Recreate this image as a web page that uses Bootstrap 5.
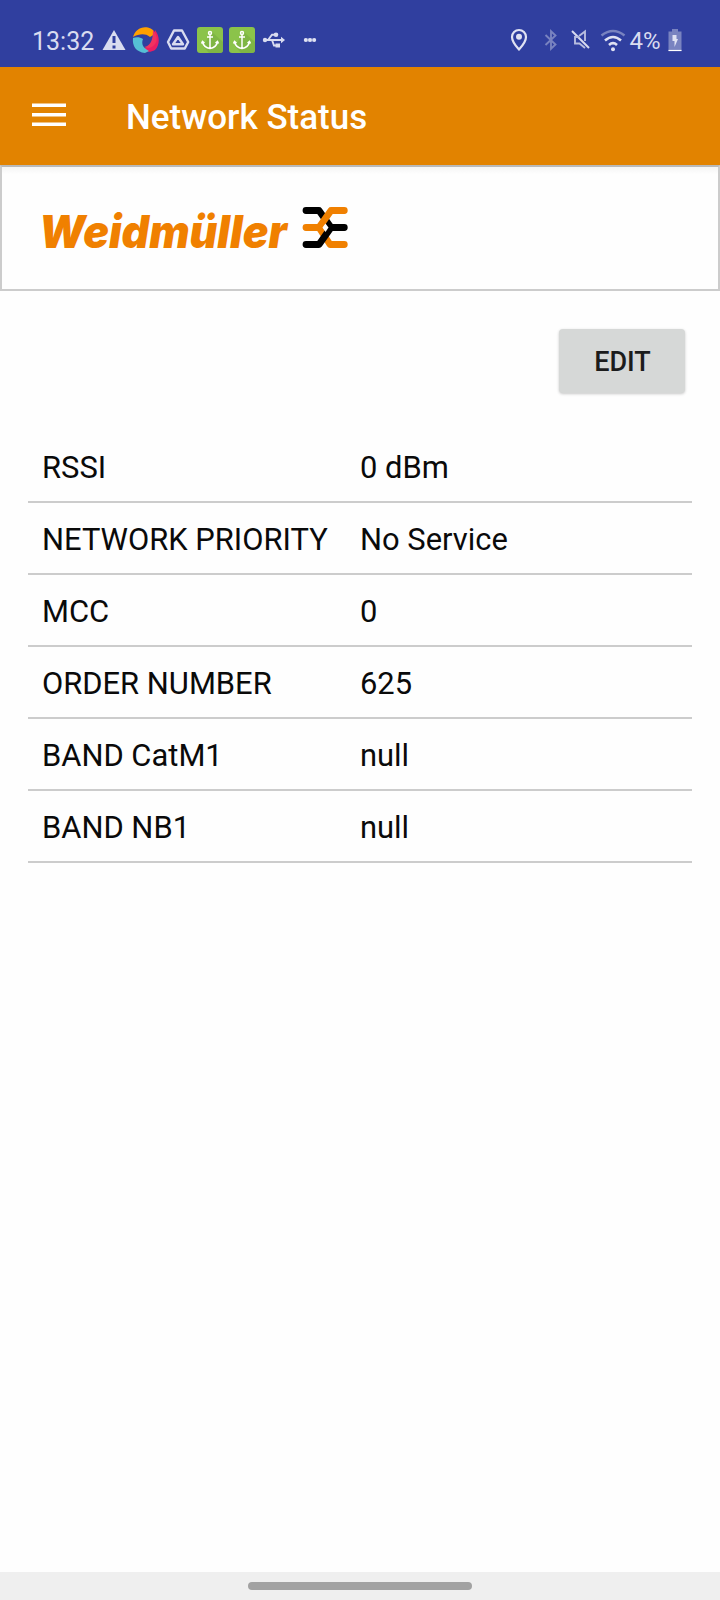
<!DOCTYPE html>
<html lang="en">
<head>
<meta charset="utf-8">
<meta name="viewport" content="width=device-width, initial-scale=1">
<title>Network Status</title>
<link href="https://cdn.jsdelivr.net/npm/bootstrap@5.3.0/dist/css/bootstrap.min.css" rel="stylesheet">
<style>
body{font-family:Roboto,"Noto Sans",sans-serif;color:#0a0a0a;background:#fefefe;height:1600px;overflow:hidden}
svg{display:block;flex:none}
.status-bar{height:67px;background:#303f9f;color:#d9dcf0}
.status-time,.status-pct{height:67px;line-height:52px;padding-top:15px;white-space:nowrap}
.status-time{width:70px;margin-left:32px;font-size:25px;padding-top:16px}
.status-pct{width:33px;font-size:24px;padding-left:1.5px}
.app-bar{height:98px;background:#e28300;color:#fff}
.app-title{font-size:35px;font-weight:500;line-height:48px;margin:3px 0 0 60px}
.menu-btn{margin-left:32px;margin-top:-2px}
.brand-box{height:126px;border:2px solid #ccc;border-top-color:#b9b9b9;background:linear-gradient(#f4f4f4,#fefefe 7px)}
.brand-box svg{margin-left:38px}
.edit-btn{width:126px;height:64px;margin:38px 35px 0 0;background:#d6d8d7;border:0;border-radius:4px;font-size:27px;font-weight:500;color:#1c1c1c;box-shadow:0 1px 3px rgba(0,0,0,.22);padding:3px 0 0 1px}
.info-list{margin:38px 28px 0}
.info-row{height:72px;border-bottom:2px solid #ccc;font-size:30.9px;line-height:36px;padding:19px 0 0 14px}
.info-key{width:318px;white-space:nowrap}
.nav-bar{height:28px;background:#efefef}
.nav-pill{width:224px;height:8px;border-radius:4px;background:#a2a2a2}
</style>
</head>
<body class="d-flex flex-column">
<header>
<div class="status-bar d-flex">
  <div class="status-time">13:32</div>
  <svg width="29" height="67" viewBox="102 0 29 67"><path d="M114 30 125.500 50H102.500Z" fill="#d9dcf0"/><path d="M114 36v7M114 45.500v3" stroke="#303f9f" stroke-width="3"/></svg>
  <svg width="32" height="67" viewBox="131 0 32 67"><path d="M133 37C135 30 141 26 148 27.500c4 1 6 3 7 6.500l-5 3c-5-4-11-3-17 0Z" fill="#ffa000"/><path d="M155 30c5 6 5 15 0 20-5 3-10 2-13-1l3-1c6-1 9-6 10-18Z" fill="#e91e63"/><path d="M153 30c4 4 5 10 2 14-3 4-7 5-11 3 6-1 9-6 9-17Z" fill="#f0325f"/><path d="M133 38c-1 8 3 14 12 15l4-2c-6-3-8-7-6-12-3-2-7-2-10-1Z" fill="#55bfd5"/></svg>
  <svg width="34" height="67" viewBox="163 0 34 67"><g fill="none" stroke="#d9dcf0" stroke-width="2.400" stroke-linejoin="round"><path d="M174 30.500h8l6.200 11.500-3.400 6.500h-13.600L168 42Z"/><path d="m178 37 5 7.300h-10Z"/></g></svg>
  <svg width="32" height="67" viewBox="197 0 32 67"><rect x="197" y="27" width="26" height="26" rx="3" fill="#8bc34a"/><path d="m212 32 11 10v8q0 3-3 3h-11l-6-7Z" fill="#7bb043" opacity=".7"/><g fill="none" stroke="#fff" stroke-width="1.500"><circle cx="210" cy="33" r="1.500"/><path d="M210 35v13M207 37h6M202.500 42c1 4 3.500 6 7.500 6.500 4-.5 6.500-2.500 7.500-6.500M201.500 43.500l1-2 2 1.500M218.500 43.500l-1-2-2 1.500"/></g></svg>
  <svg width="32" height="67" viewBox="197 0 32 67"><rect x="197" y="27" width="26" height="26" rx="3" fill="#8bc34a"/><path d="m212 32 11 10v8q0 3-3 3h-11l-6-7Z" fill="#7bb043" opacity=".7"/><g fill="none" stroke="#fff" stroke-width="1.500"><circle cx="210" cy="33" r="1.500"/><path d="M210 35v13M207 37h6M202.500 42c1 4 3.500 6 7.500 6.500 4-.5 6.500-2.500 7.500-6.500M201.500 43.500l1-2 2 1.500M218.500 43.500l-1-2-2 1.500"/></g></svg>
  <svg width="38" height="67" viewBox="261 0 38 67"><g fill="#d9dcf0"><circle cx="265" cy="40" r="2.200"/><path d="m281 36.800 4 3.200-4 3.200Z"/><circle cx="276" cy="34.700" r="2.300"/><rect x="275.500" y="43.500" width="4.500" height="4"/></g><path d="M265 40h17M268 40l4-5.300h4M272 40l2 5.500h3" fill="none" stroke="#d9dcf0" stroke-width="1.900"/></svg>
  <svg width="20" height="67" viewBox="299 0 20 67"><path d="M306 40h8" stroke="#8c95ca" stroke-width="3"/><g fill="#e0e2f3"><circle cx="305.700" cy="40" r="1.900"/><circle cx="310" cy="40" r="1.900"/><circle cx="314.300" cy="40" r="1.900"/></g></svg>
  <svg class="ms-auto" width="32" height="67" viewBox="508 0 32 67"><path d="M519 30a7 7 0 0 0-7 7c0 5 7 12.500 7 12.500s7-7.500 7-12.500a7 7 0 0 0-7-7Z" fill="none" stroke="#e0e2f3" stroke-width="2.200"/><circle cx="519" cy="36.700" r="3" fill="#e0e2f3"/></svg>
  <svg width="28" height="67" viewBox="540 0 28 67"><path d="m545.500 35 10 9.500-4.500 4.300V31.200l4.500 4.300-10 9.500" fill="none" stroke="#7983c0" stroke-width="1.900"/></svg>
  <svg width="32" height="67" viewBox="568 0 32 67"><path d="m572 31 17 17" stroke="#d9dcf0" stroke-width="2"/><path d="M579 36l6-4.500V41M579 37h-4v6.500h4.500l5.500 4.500" fill="none" stroke="#b7bddf" stroke-width="1.900"/></svg>
  <svg width="28" height="67" viewBox="600 0 28 67"><g fill="none" stroke-width="2.600"><path d="M601.500 35.500Q613 26.500 624.500 35.500" stroke="#7983c0"/><path d="M605 40.500q8-7 16 0M609 45q4-3.600 8 0" stroke="#e0e2f3"/></g><circle cx="613" cy="49.300" r="2" fill="#e0e2f3"/></svg>
  <div class="status-pct">4%</div>
  <svg width="59" height="67" viewBox="661 0 59 67"><path d="M668.500 31.500h3.500V29h6v2.500h3.500V51h-13Z" fill="#7983c0"/><path d="M668.500 50.500h13" stroke="#fff" stroke-width="1.200"/><path d="M672.500 35h4v4h1.500l-3.500 8v-6h-2Z" fill="#e0e2f3"/></svg>
</div>
<nav class="app-bar d-flex align-items-center" aria-label="Main">
  <svg class="menu-btn" width="34" height="24" viewBox="0 0 34 24" role="img" aria-label="Menu"><path d="M0 2.200h34M0 11.700h34M0 21.200h34" stroke="#fff" stroke-width="3.400"/></svg>
  <h1 class="app-title">Network Status</h1>
</nav>
</header>
<section class="brand-box">
  <svg width="320" height="122" viewBox="40 167 320 122" role="img" aria-label="Weidmüller">
    <text x="39" y="248" textLength="248" lengthAdjust="spacingAndGlyphs" font-family="Inter,Roboto,sans-serif" font-size="45" font-weight="900" font-style="italic" fill="#f08000">Weidmüller</text>
    <g fill="none" stroke-width="6.800" stroke-linecap="round" stroke-linejoin="round">
      <path d="M306 210.500h13l12 17" stroke="#000"/>
      <path d="M306 227.500h13l11 17h14.300" stroke="#f08000"/>
      <path d="M319 227.500l12-17h13.300" stroke="#f08000"/>
      <path d="M306 244.500h13l12-17h13.300" stroke="#000"/>
    </g>
    <path d="m325.500 223.500 3 4-3 4.500-3-4.500Z" fill="#fefefe"/>
  </svg>
</section>
<main class="flex-grow-1">
  <div class="d-flex justify-content-end"><button class="btn edit-btn" type="button">EDIT</button></div>
  <div class="info-list">
    <div class="info-row d-flex"><div class="info-key">RSSI</div><div>0 dBm</div></div>
    <div class="info-row d-flex"><div class="info-key">NETWORK PRIORITY</div><div>No Service</div></div>
    <div class="info-row d-flex"><div class="info-key">MCC</div><div>0</div></div>
    <div class="info-row d-flex"><div class="info-key">ORDER NUMBER</div><div>625</div></div>
    <div class="info-row d-flex"><div class="info-key">BAND CatM1</div><div>null</div></div>
    <div class="info-row d-flex"><div class="info-key">BAND NB1</div><div>null</div></div>
  </div>
</main>
<footer class="nav-bar d-flex align-items-center justify-content-center"><div class="nav-pill"></div></footer>
<script src="https://cdn.jsdelivr.net/npm/bootstrap@5.3.0/dist/js/bootstrap.bundle.min.js"></script>
</body>
</html>
